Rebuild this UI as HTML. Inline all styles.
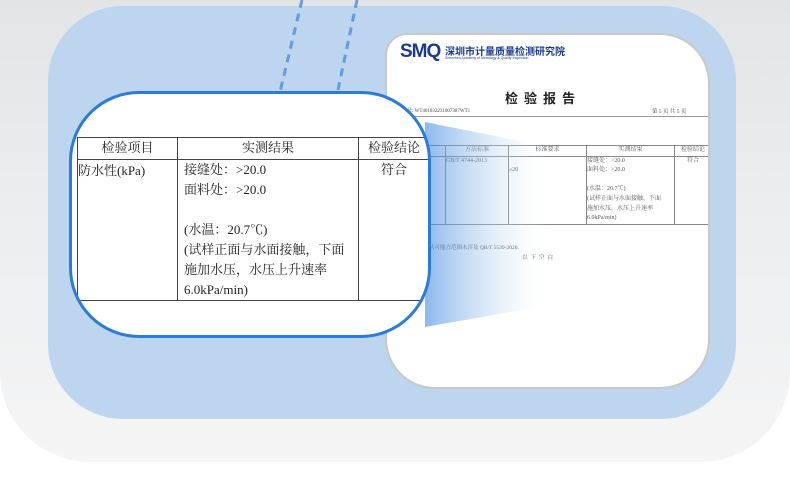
<!DOCTYPE html>
<html><head><meta charset="utf-8"><style>
*{margin:0;padding:0;box-sizing:border-box}
body{width:790px;height:500px;overflow:hidden;background:#fff;position:relative;font-family:"Liberation Serif","Noto Serif CJK SC",serif}
.bg{position:absolute;left:0;top:0;width:790px;height:462px;border-radius:0 0 90px 90px;background:linear-gradient(180deg,#e2e4e6 0%,#eceef0 50%,#f5f5f5 100%)}
.panel{position:absolute;left:48px;top:6px;width:688px;height:413px;border-radius:75px;background:#bdd5ef}
.doc{position:absolute;left:385px;top:33px;width:325px;height:356px;border-radius:22px 50px 50px 50px;background:#fff;border:2px solid #c8c8c8;overflow:hidden}
.abs{position:absolute;white-space:nowrap}
.cone{position:absolute;left:0;top:0;width:790px;height:500px}
.mag{position:absolute;left:69px;top:91px;width:362px;height:247px;border-radius:70px;border:3px solid #2b7bd9;background:#fff;overflow:hidden}
table{border-collapse:collapse}
.big td{border:1.5px solid #444;font-size:13px;color:#222;vertical-align:top;line-height:20px}
.sm td{border:1px solid #888;font-size:6px;color:#555;vertical-align:top;line-height:9.6px}
</style></head><body>
<div class="bg"></div>
<div class="panel"></div>
<svg class="cone" viewBox="0 0 790 500"><g stroke="#4a8fe0" stroke-width="3" stroke-dasharray="8 6" fill="none" opacity=".8"><line x1="302" y1="0" x2="280" y2="92"/><line x1="357" y1="0" x2="338" y2="90"/></g></svg>
<div class="doc">
  <div class="abs" style="left:13px;top:6px;font:bold 19px 'Liberation Sans',sans-serif;color:#1b3a8f;letter-spacing:-1px">SMQ</div>
  <div class="abs" style="left:58px;top:8px;font:bold 10px 'Noto Sans CJK SC',sans-serif;color:#1b3a8f">深圳市计量质量检测研究院</div>
  <div class="abs" style="left:58px;top:21px;font:3.5px 'Liberation Sans',sans-serif;color:#1b3a8f">Shenzhen Academy of Metrology &amp; Quality Inspection</div>
  <div class="abs" style="left:118px;top:53px;font:bold 13px 'Noto Sans CJK SC',sans-serif;color:#222;letter-spacing:6px">检验报告</div>
  <div class="abs" style="left:20px;top:72px;font-size:5px;color:#444">号: WT401032231007387WT1</div>
  <div class="abs" style="left:265px;top:72px;font-size:5.5px;color:#444">第 5 页 共 5 页</div>
  <div class="abs" style="left:0;top:81px;width:325px;border-top:1px solid #999"></div>
  <table class="sm abs" style="left:0;top:110px;width:325px">
    <tr style="height:10px"><td style="width:58px"></td><td style="width:63px;text-align:center">方法标准</td><td style="width:78px;text-align:center">标准要求</td><td style="width:88px;text-align:center">实测结果</td><td style="text-align:center">检验结论</td></tr>
    <tr style="height:68px"><td></td><td>GB/T 4744-2013</td><td><br>≥20</td><td>接缝处：&gt;20.0<br>面料处：&gt;20.0<br><br>(水温：20.7℃)<br>(试样正面与水面接触，下面<br>施加水压，水压上升速率<br>6.0kPa/min)</td><td style="text-align:center">符合</td></tr>
  </table>
  <div class="abs" style="left:42px;top:208px;font-size:5.5px;color:#444">认可能力范围未涉及 QB/T 5539-2020.</div>
  <div class="abs" style="left:135px;top:218px;font-size:5.5px;color:#444;letter-spacing:3px">以下空白</div>
</div>
<svg class="cone" viewBox="0 0 790 500"><defs><linearGradient id="g" x1="0" x2="1"><stop offset="0" stop-color="#3f8ae0" stop-opacity=".6"/><stop offset=".6" stop-color="#bcd5ef" stop-opacity=".35"/><stop offset="1" stop-color="#ffffff" stop-opacity="0"/></linearGradient></defs><polygon points="425,122 550,147 550,305 425,327" fill="url(#g)"/></svg>
<div class="mag">
  <table class="big abs" style="left:5px;top:43px;width:370px">
    <tr style="height:22px"><td style="width:100px;text-align:center">检验项目</td><td style="width:181px;text-align:center">实测结果</td><td style="text-align:left;padding-left:9px">检验结论</td></tr>
    <tr style="height:140px"><td style="padding-top:1px">防水性(kPa)</td><td style="padding:0 0 0 6px">接缝处：&gt;20.0<br>面料处：&gt;20.0<br><br>(水温：20.7℃)<br>(试样正面与水面接触，下面<br>施加水压，水压上升速率<br>6.0kPa/min)</td><td style="padding-left:22px">符合</td></tr>
  </table>
</div>
</body></html>
